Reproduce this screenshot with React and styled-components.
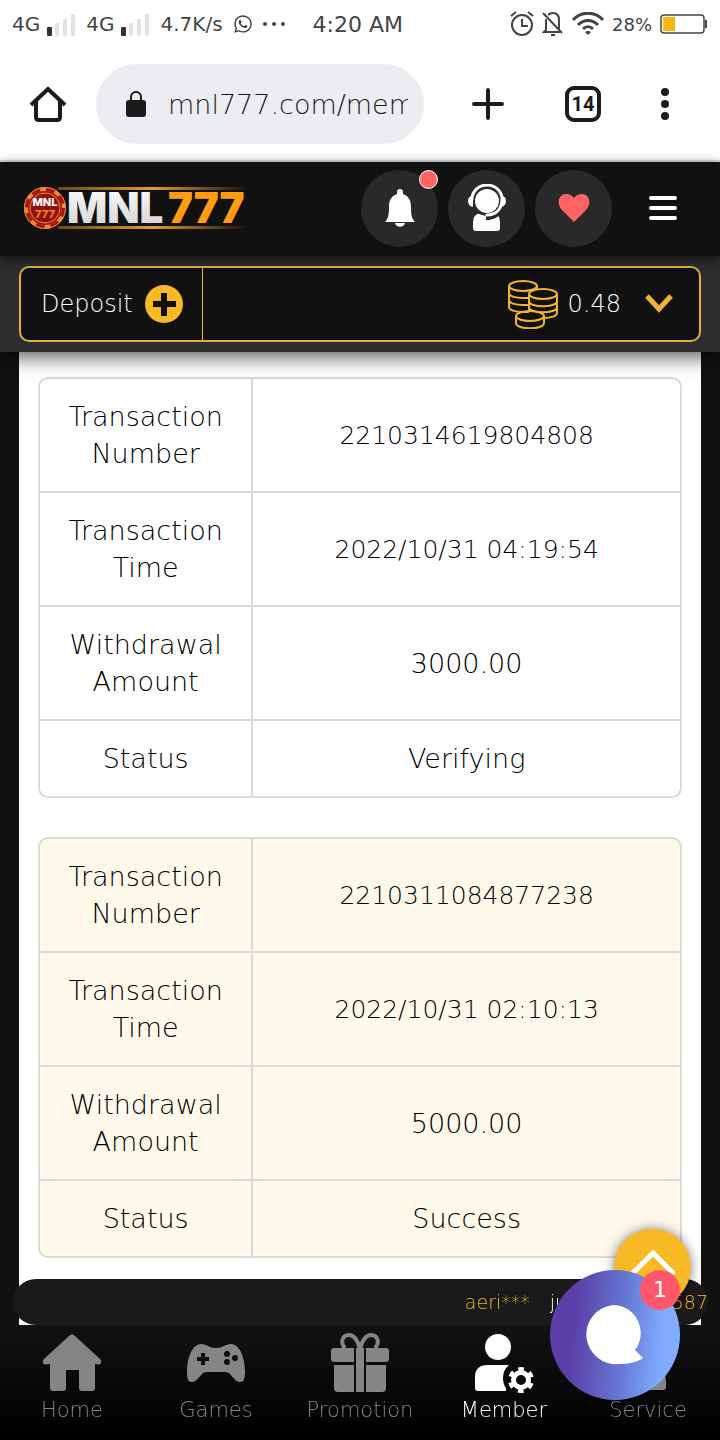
import React from "react";
import styled, {createGlobalStyle} from "styled-components";
import {FaWhatsapp} from "react-icons/fa";

const GlobalStyle = createGlobalStyle`
  * {
    box-sizing: border-box;
  }
  body {
    margin: 0;
    background: #111;
    color: #000;
    font-family: "DejaVu Sans", "Inter", sans-serif;
    font-weight: 200;
  }
  button, input {
    font: inherit;
    color: inherit;
  }
  svg {
    display: block;
    flex: none;
  }
`

const StyledPage = styled.div`
  display: flex;
  flex-direction: column;
  min-height: 100vh;
`

const StatusBar = styled.div`
  display: flex;
  align-items: center;
  justify-content: space-between;
  height: 48px;
  padding: 0 12px;
  background: #fff;
  color: #444;
  font-size: 20px;
  font-weight: 400;
`
const StatusGroup = styled.div`
  display: flex;
  align-items: center;
  gap: ${props => props.$gap || 8}px;
`
const Clock = styled.span`
  margin-left: 16px;
  font-size: 22px;
`
const BatteryText = styled.span`
  font-size: 18px;
`

const BrowserBar = styled.div`
  display: flex;
  align-items: center;
  height: 114px;
  padding: 0 28px;
  border-bottom: 2px solid #dcdee2;
  background: #fff;
  color: #1b1b1d;
`
const PlainButton = styled.button`
  display: flex;
  align-items: center;
  justify-content: center;
  padding: 0;
  border: none;
  background: none;
  cursor: pointer;
`
const AddressBox = styled.label`
  display: flex;
  flex: 1;
  align-items: center;
  gap: 20px;
  min-width: 0;
  height: 80px;
  margin: 0 47px 0 28px;
  padding: 0 16px 0 28px;
  border-radius: 40px;
  background: #ecedf1;
`
const AddressInput = styled.input`
  flex: 1;
  width: 0;
  min-width: 0;
  padding: 0;
  border: none;
  outline: none;
  background: none;
  font-size: 27px;
`
const BrowserActions = styled.div`
  display: flex;
  align-items: center;
  gap: 60px;
  padding-right: 23px;
`
const TabCount = styled(PlainButton)`
  width: 36px;
  height: 36px;
  border: 4px solid #1b1b1d;
  border-radius: 9px;
  font-family: Roboto, sans-serif;
  font-size: 20px;
  font-weight: 700;
`

const Header = styled.header`
  position: relative;
  z-index: 1;
  display: flex;
  align-items: center;
  justify-content: space-between;
  height: 94px;
  padding: 0 42px 2px 22px;
  background: #111;
  box-shadow: 0 3px 12px rgba(0, 0, 0, 0.6);
`
const HeaderActions = styled.div`
  display: flex;
  align-items: center;
  gap: 10px;
`
const RoundButton = styled(PlainButton)`
  position: relative;
  width: 77px;
  height: 77px;
  border-radius: 50%;
  background: #292929;
`
const Dot = styled.span`
  position: absolute;
  top: 0;
  right: 0;
  width: 19px;
  height: 19px;
  border: 1px solid #fff;
  border-radius: 50%;
  background: #ff6464;
`
const MenuButton = styled(PlainButton)`
  width: 30px;
  height: 30px;
  margin-left: 26px;
`

const WalletStrip = styled.section`
  position: relative;
  padding: 10px 19px;
  background: #2e2e2e;
  box-shadow: 0 4px 20px rgba(0, 0, 0, 0.7);
`
const WalletBox = styled.div`
  display: flex;
  justify-content: space-between;
  height: 76px;
  border: 2px solid #dfb040;
  border-radius: 10px;
  background: #111;
  color: #fff;
  font-size: 24px;
`
const DepositButton = styled(PlainButton)`
  gap: 12px;
  padding: 0 19px 0 20px;
  border-right: 1px solid #e8b43c;
`
const BalanceButton = styled(PlainButton)`
  gap: 10px;
  padding-right: 26px;
`
const BalanceText = styled.span`
  margin-right: 14px;
`

const Sheet = styled.main`
  display: flex;
  flex: 1;
  flex-direction: column;
  gap: 39px;
  margin: 0 19px;
  padding: 25px 19px 180px;
  background: #fff;
`
const RecordTable = styled.table`
  width: 100%;
  border: 2px solid #dadada;
  border-radius: 10px;
  border-spacing: 0;
  table-layout: fixed;
  background: ${props => props.$tinted ? "#fff9eb" : "#fff"};
  font-size: 27px;
  line-height: 37px;
  text-align: center;

  tr + tr > * {
    border-top: 2px solid #dadada;
  }
`
const RecordLabel = styled.th`
  width: calc(100% / 3);
  padding: 19px 20px;
  border-right: 2px solid #dadada;
  font-weight: 200;
`
const RecordValue = styled.td`
  padding: 19px 10px;
  font-size: ${props => props.$long ? 25 : 27}px;
`

const Dock = styled.footer`
  position: fixed;
  right: 0;
  bottom: 0;
  left: 0;
`
const Ticker = styled.div`
  display: flex;
  align-items: center;
  justify-content: flex-end;
  gap: 20px;
  height: 46px;
  margin: 0 12px 0 13px;
  border-radius: 23px;
  background: #1a1a1a;
  color: #fff;
  font-size: 19px;
  white-space: nowrap;
`
const Gold = styled.span`
  color: #f7b924;
`
const TickerText = styled.span`
  width: 102px;
  overflow: hidden;
`
const BottomNav = styled.nav`
  display: grid;
  grid-template-columns: repeat(5, 1fr);
  height: 115px;
  background: linear-gradient(#121212, #000);
`
const NavLink = styled.a`
  display: flex;
  flex-direction: column;
  align-items: center;
  gap: 5px;
  padding-top: 8px;
  color: ${props => props.$active ? "#fff" : "#858585"};
  font-size: 21px;
  line-height: 24px;
  text-decoration: none;
`

const TopButton = styled(PlainButton)`
  position: fixed;
  right: 29px;
  bottom: 134px;
  align-items: flex-start;
  width: 77px;
  height: 77px;
  padding-top: 20px;
  border-radius: 50%;
  background: #f7b924;
  box-shadow: 0 0 12px rgba(0, 0, 0, 0.5);
`
const ChatButton = styled(PlainButton)`
  position: fixed;
  right: 40px;
  bottom: 40px;
  width: 130px;
  height: 130px;
  border-radius: 50%;
  background: linear-gradient(95deg, #5b3fa9 20%, #6676d2 55%, #80adff 85%);
`
const ChatBadge = styled.span`
  position: absolute;
  top: 0;
  right: 0;
  width: 40px;
  height: 40px;
  border-radius: 50%;
  background: #ff586b;
  color: #fff;
  font-size: 22px;
  font-weight: 400;
  line-height: 40px;
  text-align: center;
`

const Signal = () => (
    <svg width="30" height="24" viewBox="0 0 30 24">
        <rect x="1" y="15" width="5" height="9" rx="1" fill="#333"/>
        <rect x="9" y="11" width="4" height="13" rx="1" fill="#e2e2e2"/>
        <rect x="17" y="7" width="4" height="17" rx="1" fill="#e2e2e2"/>
        <rect x="25" y="2" width="4" height="22" rx="1" fill="#e2e2e2"/>
    </svg>
)

const AlarmIcon = () => (
    <svg width="24" height="26" viewBox="0 0 24 26" fill="none" stroke="#444" strokeWidth="2">
        <circle cx="12" cy="14" r="10"/>
        <path d="M12 8v7h6M1 5l5-4M23 5l-5-4"/>
    </svg>
)

const MutedBellIcon = () => (
    <svg width="22" height="26" viewBox="0 0 22 26" fill="none" stroke="#444" strokeWidth="2">
        <path d="M6 4c2-2 4-2 5-2 4 0 6 3 6 7v9M4 8v11l-2 2h16M1 2l19 20M9 24h4"/>
    </svg>
)

const WifiIcon = () => (
    <svg width="32" height="24" viewBox="0 0 32 24" fill="none" stroke="#444" strokeWidth="3">
        <path d="M1 8C9-1 23-1 31 8M6 13c6-6 14-6 20 0M11 17c3-3 7-3 10 0"/>
        <path d="M13 20q3-2 6 0l-3 3z" fill="#444" stroke="none"/>
    </svg>
)

const BatteryIcon = () => (
    <svg width="48" height="20" viewBox="0 0 48 20">
        <rect x="1" y="1" width="43" height="18" rx="3" fill="none" stroke="#444" strokeWidth="1.5"/>
        <rect x="3" y="3" width="12" height="14" fill="#f9b410"/>
        <path d="M45 6h2v8h-2z" fill="#444"/>
    </svg>
)

const HomeOutline = () => (
    <svg width="40" height="40" viewBox="0 0 40 40" fill="none" stroke="#1b1b1d" strokeWidth="4">
        <path d="M3 21L20 5l17 16M8 17v16q0 3 3 3h18q3 0 3-3V17"/>
    </svg>
)

const LockIcon = () => (
    <svg width="24" height="28" viewBox="0 0 24 28">
        <rect x="2" y="10" width="20" height="17" rx="3" fill="#1b1b1d"/>
        <path d="M7 12V7a5 5 0 0 1 10 0v5" fill="none" stroke="#1b1b1d" strokeWidth="2"/>
    </svg>
)

const Logo = () => (
    <svg width="232" height="60" viewBox="0 -7 232 60" role="img" aria-label="MNL777">
        <defs>
            <linearGradient id="line">
                <stop offset="0" stopColor="#6b4a12"/>
                <stop offset="0.5" stopColor="#e09a3a"/>
                <stop offset="1" stopColor="#111"/>
            </linearGradient>
            <linearGradient id="silver" x2="0" y2="1">
                <stop offset="0" stopColor="#fff"/>
                <stop offset="1" stopColor="#d0d0d0"/>
            </linearGradient>
        </defs>
        <rect x="36" y="2" width="190" height="3" fill="url(#line)"/>
        <rect x="36" y="41" width="190" height="3" fill="url(#line)"/>
        <circle cx="23" cy="23" r="19" fill="#a3160e" stroke="#ef8a35" strokeWidth="4"/>
        <circle cx="23" cy="23" r="19" fill="none" stroke="#a3160e" strokeWidth="4" strokeDasharray="9 6"/>
        <circle cx="23" cy="23" r="20.5" fill="none" stroke="#ef8a35" strokeWidth="1"/>
        <circle cx="23" cy="23" r="15" fill="#8e120c" stroke="#ef8a35" strokeWidth="1"/>
        <g fontFamily="Inter" fontWeight="800">
            <text x="23" y="21" textAnchor="middle" fontSize="11" fill="#fff">MNL</text>
            <text x="23" y="33" textAnchor="middle" fontSize="11" fill="#f47a28">777</text>
            <g fontSize="42" fontWeight="900">
                <text x="45" y="38" fill="url(#silver)">MNL</text>
                <text x="146" y="38" fill="#ff9c12">777</text>
            </g>
        </g>
    </svg>
)

const BellIcon = () => (
    <svg width="32" height="38" viewBox="0 0 32 38" fill="#fff">
        <path d="M13 3a3 3 0 0 1 6 0v2c6 2 8 7 8 13 0 8 1 12 4 15H1c3-3 4-7 4-15C5 12 7 7 13 5zM11 34h10c-1 5-9 5-10 0z"/>
    </svg>
)

const SupportIcon = () => (
    <svg width="40" height="48" viewBox="0 0 40 48">
        <path d="M6 46V38q0-8 8-9h12q7 1 7 9v6q0 3-3 3H9q-3 0-3-3z" fill="#fff"/>
        <circle cx="20" cy="17" r="15" fill="#292929"/>
        <circle cx="20" cy="17" r="12" fill="#fff"/>
        <path d="M33 24c-2 6-7 9-14 9" fill="none" stroke="#292929" strokeWidth="6"/>
        <path d="M5 15a15 14 0 0 1 30 0c0 10-6 16-15 16" fill="none" stroke="#fff" strokeWidth="3" strokeLinecap="round"/>
        <path d="M6 12q-5 0-5 5t5 6zM34 12q5 0 5 5t-5 6z" fill="#fff"/>
    </svg>
)

const HeartIcon = () => (
    <svg width="32" height="30" viewBox="0 0 32 30">
        <path d="M16 29L4 17C-3 9 2 1 8 1q5 0 8 4 3-4 8-4c6 0 11 8 4 16z" fill="#ff6464"/>
    </svg>
)

const MenuIcon = () => (
    <svg width="28" height="26" viewBox="0 0 28 26" stroke="#fff" strokeWidth="4" strokeLinecap="round">
        <path d="M2 3h24M2 13h24M2 23h24"/>
    </svg>
)

const PlusBadge = () => (
    <svg width="38" height="38" viewBox="0 0 38 38">
        <circle cx="19" cy="19" r="19" fill="#f7b924"/>
        <path d="M19 8v23M8 19h23" stroke="#111" strokeWidth="6"/>
    </svg>
)

const CoinsIcon = () => (
    <svg width="50" height="50" viewBox="0 0 50 50" fill="none" stroke="#f0b432" strokeWidth="2">
        <ellipse cx="15" cy="7" rx="14" ry="5"/>
        <path d="M1 7v21c0 3 6 5 14 5h6M29 7v4M1 14c0 3 6 5 14 5h6M1 21c0 3 6 5 14 5h6"/>
        <ellipse cx="35" cy="15" rx="14" ry="5"/>
        <path d="M21 15v16M49 15v19c0 3-6 5-13 5M21 22c0 7 28 7 28 0M21 28c0 7 28 7 28 0"/>
        <ellipse cx="22" cy="37" rx="14" ry="5"/>
        <path d="M8 37v7c0 7 28 7 28 0v-7"/>
    </svg>
)

const HouseIcon = () => (
    <svg width="60" height="60" viewBox="0 0 60 60" fill="currentColor">
        <path d="M27 3q3-3 6 0l25 23c3 3 0 7-4 5h-1v24q0 3-3 3H40q-3 0-3-3V37H24v18q0 3-3 3H11q-3 0-3-3V31H6c-4 2-7-2-4-5z"/>
    </svg>
)

const GamepadIcon = () => (
    <svg width="60" height="60" viewBox="0 0 60 60">
        <path d="M15 11c6 0 8 4 15 4s9-4 15-4c9 0 14 15 14 27 0 8-1 11-5 11-6 0-9-10-14-10H20c-5 0-8 10-14 10-4 0-5-3-5-11 0-12 5-27 14-27z" fill="currentColor"/>
        <path d="M17 20v12M11 26h12" stroke="#0c0c0c" strokeWidth="4"/>
        <g fill="#0c0c0c">
            <circle cx="41" cy="21" r="3"/>
            <circle cx="49" cy="25" r="3"/>
            <circle cx="41" cy="29" r="3"/>
        </g>
    </svg>
)

const GiftIcon = () => (
    <svg width="60" height="60" viewBox="0 0 60 60" fill="currentColor">
        <path d="M4 15h20v14H4q-3 0-3-3v-8q0-3 3-3zM36 15h20q3 0 3 3v8q0 3-3 3H36zM4 32h20v27H8q-4 0-4-4zM36 32h20v23q0 4-4 4H36zM26 15h8v44h-8z"/>
        <path d="M30 17c-2-11-7-15-11-15-7 0-9 8-4 13M30 17c2-11 7-15 11-15 7 0 9 8 4 13" fill="none" stroke="currentColor" strokeWidth="4"/>
    </svg>
)

const MemberIcon = () => (
    <svg width="60" height="60" viewBox="0 0 60 60" fill="currentColor">
        <circle cx="24" cy="14" r="13"/>
        <path d="M1 55V44q0-12 13-12h21q-6 5-6 13 0 6 3 10v3H4q-3 0-3-3z"/>
        <circle cx="47" cy="47" r="7.5" fill="none" stroke="currentColor" strokeWidth="5"/>
        <circle cx="47" cy="47" r="11" fill="none" stroke="currentColor" strokeWidth="4" strokeDasharray="5.5 6.02" transform="rotate(-104 47 47)"/>
    </svg>
)

const ServiceIcon = () => (
    <svg width="60" height="60" viewBox="0 0 60 60" fill="currentColor">
        <circle cx="30" cy="18" r="13"/>
        <path d="M12 50q0-16 12-16h12q12 0 12 16v4q0 3-3 3H15q-3 0-3-3z"/>
    </svg>
)

const records = [
    {number: "2210314619804808", time: "2022/10/31 04:19:54", amount: "3000.00", status: "Verifying"},
    {number: "2210311084877238", time: "2022/10/31 02:10:13", amount: "5000.00", status: "Success"},
];

const links = [
    {label: "Home", Icon: HouseIcon},
    {label: "Games", Icon: GamepadIcon},
    {label: "Promotion", Icon: GiftIcon},
    {label: "Member", Icon: MemberIcon, active: true},
    {label: "Service", Icon: ServiceIcon},
];

const Record = ({record, tinted}) => (
    <RecordTable $tinted={tinted}>
        <tbody>
            <tr>
                <RecordLabel scope="row">Transaction Number</RecordLabel>
                <RecordValue $long>{record.number}</RecordValue>
            </tr>
            <tr>
                <RecordLabel scope="row">Transaction Time</RecordLabel>
                <RecordValue $long>{record.time}</RecordValue>
            </tr>
            <tr>
                <RecordLabel scope="row">Withdrawal Amount</RecordLabel>
                <RecordValue>{record.amount}</RecordValue>
            </tr>
            <tr>
                <RecordLabel scope="row">Status</RecordLabel>
                <RecordValue>{record.status}</RecordValue>
            </tr>
        </tbody>
    </RecordTable>
)

const App = () => {
    return (
        <StyledPage>
            <GlobalStyle/>
            <StatusBar>
                <StatusGroup $gap={10}>
                    <StatusGroup $gap={6}>4G <Signal/></StatusGroup>
                    <StatusGroup $gap={6}>4G <Signal/></StatusGroup>
                    <span>4.7K/s</span>
                    <FaWhatsapp size={20}/>
                    <svg width="24" height="4" viewBox="0 0 24 4" fill="#444">
                        <circle cx="2" cy="2" r="2"/>
                        <circle cx="11" cy="2" r="2"/>
                        <circle cx="20" cy="2" r="2"/>
                    </svg>
                    <Clock>4:20 AM</Clock>
                </StatusGroup>
                <StatusGroup>
                    <AlarmIcon/>
                    <MutedBellIcon/>
                    <WifiIcon/>
                    <BatteryText>28%</BatteryText>
                    <BatteryIcon/>
                </StatusGroup>
            </StatusBar>

            <BrowserBar>
                <PlainButton aria-label="Home page"><HomeOutline/></PlainButton>
                <AddressBox>
                    <LockIcon/>
                    <AddressInput aria-label="Address" defaultValue="mnl777.com/mem"/>
                </AddressBox>
                <BrowserActions>
                    <PlainButton aria-label="New tab">
                        <svg width="34" height="34" viewBox="0 0 34 34" stroke="#1b1b1d" strokeWidth="4" strokeLinecap="round">
                            <path d="M17 3v28M3 17h28"/>
                        </svg>
                    </PlainButton>
                    <TabCount aria-label="Open tabs">14</TabCount>
                    <PlainButton aria-label="More">
                        <svg width="8" height="34" viewBox="0 0 8 34" fill="#1b1b1d">
                            <circle cx="4" cy="5" r="4"/>
                            <circle cx="4" cy="17" r="4"/>
                            <circle cx="4" cy="29" r="4"/>
                        </svg>
                    </PlainButton>
                </BrowserActions>
            </BrowserBar>

            <Header>
                <Logo/>
                <HeaderActions>
                    <RoundButton aria-label="Notifications"><BellIcon/><Dot/></RoundButton>
                    <RoundButton aria-label="Support"><SupportIcon/></RoundButton>
                    <RoundButton aria-label="Favorites"><HeartIcon/></RoundButton>
                    <MenuButton aria-label="Menu"><MenuIcon/></MenuButton>
                </HeaderActions>
            </Header>

            <WalletStrip>
                <WalletBox>
                    <DepositButton>Deposit <PlusBadge/></DepositButton>
                    <BalanceButton>
                        <CoinsIcon/>
                        <BalanceText>0.48</BalanceText>
                        <svg width="28" height="20" viewBox="0 0 28 20" fill="none" stroke="#f0b432" strokeWidth="5">
                            <path d="M2 2l12 13L26 2"/>
                        </svg>
                    </BalanceButton>
                </WalletBox>
            </WalletStrip>

            <Sheet>
                {records.map((record, i) => <Record key={record.number} record={record} tinted={i % 2 === 1}/>)}
            </Sheet>

            <Dock>
                <Ticker>
                    <Gold>aeri***</Gold>
                    <TickerText>just won</TickerText>
                    <Gold>587</Gold>
                </Ticker>
                <BottomNav>
                    {links.map(({label, Icon, active}) => (
                        <NavLink key={label} href="#" $active={active}>
                            <Icon/>
                            {label}
                        </NavLink>
                    ))}
                </BottomNav>
            </Dock>

            <TopButton aria-label="Back to top">
                <svg width="46" height="30" viewBox="0 0 46 30" fill="none" stroke="#fff" strokeWidth="5">
                    <path d="M2 25L23 4l21 21"/>
                </svg>
            </TopButton>
            <ChatButton aria-label="Chat">
                <svg width="60" height="62" viewBox="0 0 60 62" fill="#fff">
                    <path d="M28 1a28 28 0 0 1 22 45l8 8c-6 4-14 6-24 6A29 29 0 0 1 28 1z"/>
                </svg>
                <ChatBadge>1</ChatBadge>
            </ChatButton>
        </StyledPage>
    );
}

export default App;
